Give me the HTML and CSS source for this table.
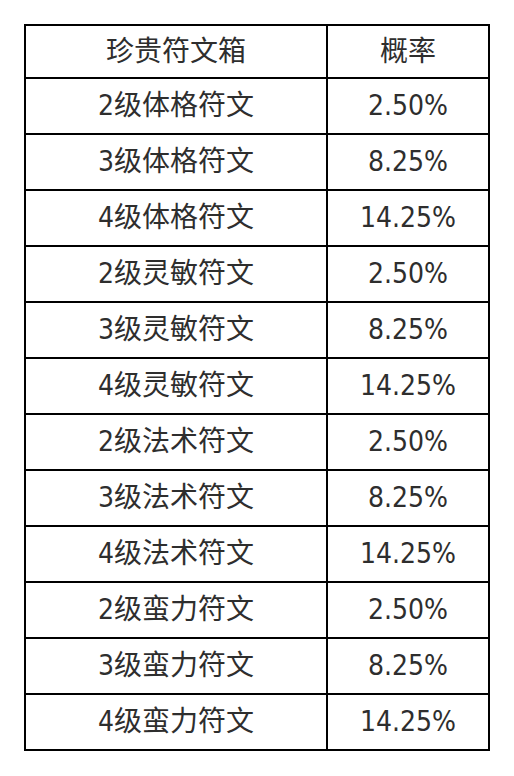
FILE: index.html
```html
<!DOCTYPE html>
<html lang="zh-CN">
<head>
<meta charset="utf-8">
<title>珍贵符文箱</title>
<link rel="stylesheet" href="styles.css">
</head>
<body>
<div class="table">
  <div class="cell head">珍贵符文箱</div><div class="cell head">概率</div>
  <div class="cell">2级体格符文</div><div class="cell">2.50%</div>
  <div class="cell">3级体格符文</div><div class="cell">8.25%</div>
  <div class="cell">4级体格符文</div><div class="cell">14.25%</div>
  <div class="cell">2级灵敏符文</div><div class="cell">2.50%</div>
  <div class="cell">3级灵敏符文</div><div class="cell">8.25%</div>
  <div class="cell">4级灵敏符文</div><div class="cell">14.25%</div>
  <div class="cell">2级法术符文</div><div class="cell">2.50%</div>
  <div class="cell">3级法术符文</div><div class="cell">8.25%</div>
  <div class="cell">4级法术符文</div><div class="cell">14.25%</div>
  <div class="cell">2级蛮力符文</div><div class="cell">2.50%</div>
  <div class="cell">3级蛮力符文</div><div class="cell">8.25%</div>
  <div class="cell">4级蛮力符文</div><div class="cell">14.25%</div>
</div>
</body>
</html>
```
FILE: styles.css
```css
html, body {
  margin: 0;
  padding: 0;
  background: #ffffff;
}
body {
  padding: 24px 0 0 24px;
  font-family: "DejaVu Sans Condensed", "Noto Sans CJK SC", sans-serif;
  font-size: 28px;
  color: #2e2e2e;
}
.table {
  display: grid;
  grid-template-columns: 300px 160px;
  grid-template-rows: 51px repeat(12, 54px);
  gap: 2px;
  padding: 2px;
  background: #000000;
  width: max-content;
}
.cell {
  background: #ffffff;
  display: flex;
  align-items: center;
  justify-content: center;
  line-height: 1;
  white-space: nowrap;
}
```
